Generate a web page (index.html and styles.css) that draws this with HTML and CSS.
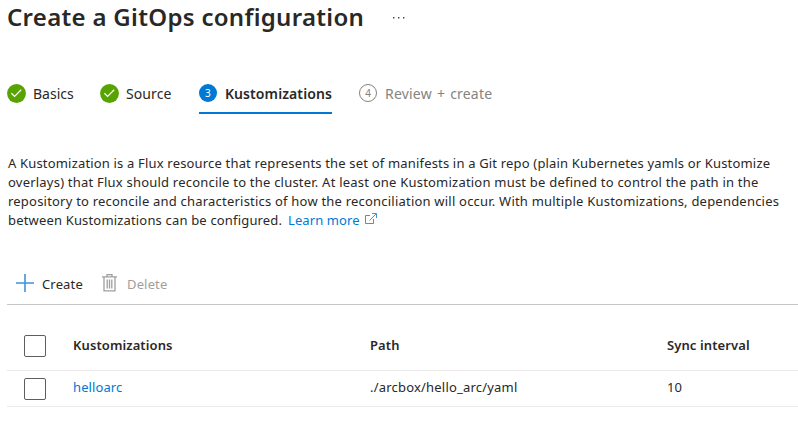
FILE: index.html
```html
<!DOCTYPE html>
<html lang="en">
<head>
<meta charset="utf-8">
<title>Create a GitOps configuration</title>
<link rel="stylesheet" href="styles.css">
</head>
<body>
<header class="heading">
  <h1 class="title">Create a GitOps configuration</h1>
  <svg class="more" width="14" height="4" viewBox="0 0 14 4"><path d="M1 1h1.4v1.4H1zM6 1h1.4v1.4H6zM11 1h1.4v1.4H11z" fill="#444"/></svg>
</header>
<nav class="tabs">
  <a class="tab basics">
    <svg class="step" width="19" height="19" viewBox="0 0 19 19"><circle cx="9.5" cy="9.5" r="9.4" fill="#57a300"/><path d="M4.4 9.2l3.2 3.2 6.6-6.6" fill="none" stroke="#fff" stroke-width="1.3"/></svg>
    <span class="label">Basics</span>
  </a>
  <a class="tab source">
    <svg class="step" width="19" height="19" viewBox="0 0 19 19"><circle cx="9.5" cy="9.5" r="9.4" fill="#57a300"/><path d="M4.4 9.2l3.2 3.2 6.6-6.6" fill="none" stroke="#fff" stroke-width="1.3"/></svg>
    <span class="label">Source</span>
  </a>
  <a class="tab current"><span class="num">3</span><span class="label">Kustomizations</span></a>
  <a class="tab upcoming"><span class="num">4</span><span class="label">Review + create</span></a>
</nav>
<p class="intro">
  <span class="line l1">A Kustomization is a Flux resource that represents the set of manifests in a Git repo (plain Kubernetes yamls or Kustomize</span>
  <span class="line l2">overlays) that Flux should reconcile to the cluster. At least one Kustomization must be defined to control the path in the</span>
  <span class="line l3">repository to reconcile and characteristics of how the reconciliation will occur. With multiple Kustomizations, dependencies</span>
  <span class="line l4"><span class="tail">between Kustomizations can be configured.</span><a class="link learn">Learn more</a><svg class="external" width="12" height="12" viewBox="0 0 12 12" fill="none" stroke="#3a96dd"><path d="M5 2.5H.5v8h8V6M7 .5h4.5V5M11.3.7L4.5 7.5"/></svg></span>
</p>
<div class="toolbar">
  <svg class="plus" width="18" height="18" viewBox="0 0 18 18"><path d="M0 9h18M9 0v18" stroke="#3d94dc" stroke-width="1.6"/></svg>
  <span class="create">Create</span>
  <svg class="trash" width="15" height="18" viewBox="0 0 15 18" fill="none" stroke="#a19f9d"><path d="M0 2.8h15M5 3V.7h5V3M2 3.5v13.4h11V3.5" stroke-width="1.3"/><path d="M5.2 5.5v9M7.5 5.5v9M9.8 5.5v9" stroke-width="1.3"/></svg>
  <span class="delete">Delete</span>
</div>
<div class="grid">
  <div class="row head">
    <span class="box"></span><span class="c-name">Kustomizations</span><span class="c-path">Path</span><span class="c-sync">Sync interval</span>
  </div>
  <div class="row item">
    <span class="box"></span><a class="link c-name">helloarc</a><span class="c-path">./arcbox/hello_arc/yaml</span><span class="c-sync">10</span>
  </div>
</div>
</body>
</html>
```
FILE: styles.css
```css
* { box-sizing: border-box; }
body {
  margin: 0;
  height: 429px;
  overflow: hidden;
  background: #fff;
  color: #292827;
  font-family: "Noto Sans", "Open Sans", sans-serif;
  font-size: 13px;
  white-space: nowrap;
}
.heading { display: flex; align-items: center; height: 36px; padding-left: 7px; }
.title { margin: -2px 0 0; width: 385px; font-size: 24px; font-weight: 600; line-height: 36px; letter-spacing: .3px; }
.tabs { display: flex; height: 42px; margin: 36px 0 0 7px; font-size: 14px; }
.tab { display: flex; align-items: center; height: 42px; padding-top: 2px; border-bottom: 2px solid transparent; }
.step { margin-right: 7px; }
.basics { width: 93px; }
.source { width: 99px; letter-spacing: .1px; }
.current { width: 133px; border-color: #0078d4; font-weight: 600; letter-spacing: .1px; }
.upcoming { margin-left: 27px; color: #858381; letter-spacing: .2px; word-spacing: 1.2px; }
.num {
  display: flex; align-items: center; justify-content: center;
  width: 18px; height: 18px; margin-right: 8px;
  border-radius: 50%; font-size: 10px; font-weight: 400; letter-spacing: 0;
}
.current .num { background: #0078d4; color: #fff; }
.upcoming .num { border: 1px solid #858381; }
.intro { margin: 40px 0 0 8px; line-height: 19px; }
.line { display: block; }
.l1 { letter-spacing: .175px; }
.l2 { letter-spacing: .215px; }
.l3 { letter-spacing: .21px; }
.l4 { display: flex; align-items: center; }
.tail { width: 280px; letter-spacing: .17px; }
.learn { width: 77px; letter-spacing: .1px; }
.external { margin-top: -3px; }
.link { color: #0078d4; }
.toolbar { display: flex; align-items: center; height: 41px; margin: 34px 0 0 7px; padding: 0 0 2px 9px; border-bottom: 1px solid #c8c6c4; }
.create, .delete { padding-top: 2px; letter-spacing: .15px; }
.create { width: 60px; margin-left: 8px; }
.delete { margin-left: 10px; color: #a19f9d; }
.grid { margin-left: 7px; }
.row { display: grid; grid-template-columns: 66px 297px 297px 1fr; align-items: center; border-bottom: 1px solid #edebe9; letter-spacing: .1px; }
.head { height: 66px; padding-top: 16px; font-weight: 600; }
.head > :not(.box) { padding-bottom: 2px; }
.item { height: 36px; }
.item > :not(.box) { padding-bottom: 4px; }
.item .c-path { letter-spacing: .2px; }
.box { width: 22px; height: 22px; margin-left: 17px; border: 1px solid #605e5c; border-radius: 2px; }
```
